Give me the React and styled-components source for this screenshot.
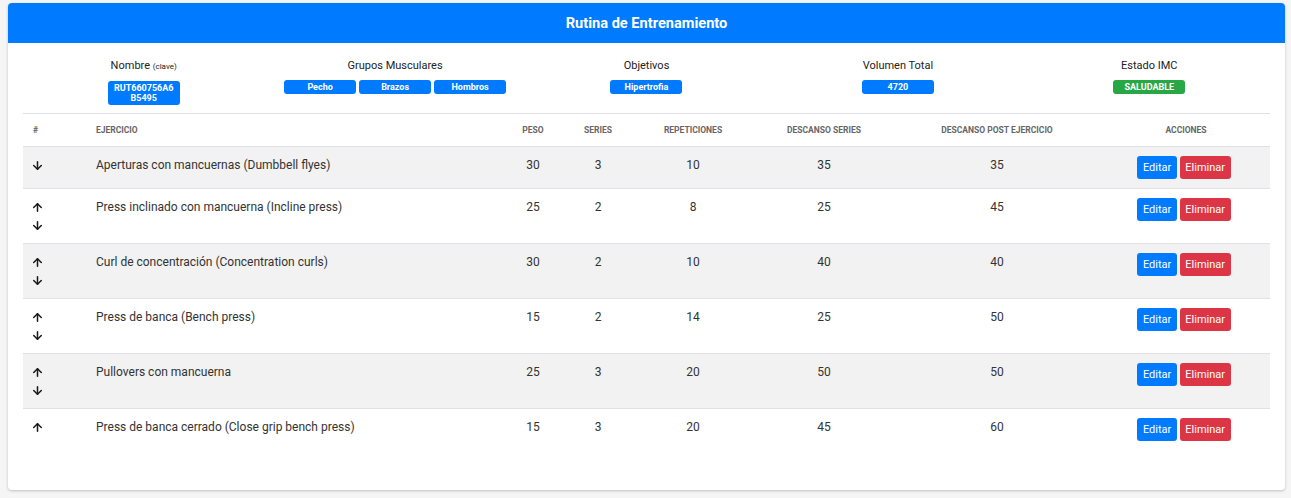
import React from "react";
import styled, { createGlobalStyle } from "styled-components";
import { ArrowUp, ArrowDown } from "lucide-react";

const Global = createGlobalStyle`
  html, body { margin: 0; padding: 0; background: #f5f5f5; }
  body { font-family: Roboto, "Liberation Sans", sans-serif; color: #333; }
  * { box-sizing: border-box; }
`;

const Page = styled.div`
  padding: 3px 6px 0 8px;
  height: 498px;
`;

const Card = styled.div`
  background: #fff;
  border-radius: 4px;
  box-shadow: 0 1px 3px rgba(0, 0, 0, 0.22);
  overflow: hidden;
  height: 487px;
`;

const CardHeader = styled.div`
  background: #007bff;
  height: 40px;
  display: flex;
  align-items: center;
  justify-content: center;
  color: #fff;
  font-weight: 700;
  font-size: 14.6px;
`;

const Info = styled.div`
  display: grid;
  grid-template-columns: repeat(5, 1fr);
  padding: 16px 10px 0 10px;
  height: 70px;
`;

const InfoCol = styled.div`
  display: flex;
  flex-direction: column;
  align-items: center;
  gap: 8px;
`;

const Label = styled.div`
  font-size: 11px;
  line-height: 13px;
  color: #222;
  small { font-size: 8px; }
`;

const BadgeRow = styled.div`
  display: flex;
  gap: 3px;
`;

const Badge = styled.span`
  width: 72px;
  min-height: 14px;
  border-radius: 3px;
  background: ${(p) => p.$bg || "#007bff"};
  color: #fff;
  font-weight: 700;
  font-size: 9px;
  line-height: 10px;
  padding: 2px 4px;
  text-align: center;
  word-break: break-all;
`;

const TableWrap = styled.div`
  padding: 0 15px;
`;

const Table = styled.table`
  width: 100%;
  border-collapse: collapse;
  table-layout: fixed;
`;

const Th = styled.th`
  height: 33px;
  border-top: 1px solid #dee2e6;
  border-bottom: 1px solid #dee2e6;
  font-size: 8.5px;
  font-weight: 700;
  color: #666;
  text-transform: uppercase;
  text-align: ${(p) => p.$align || "center"};
  padding: 0 10px;
  vertical-align: middle;
`;

const Tr = styled.tr`
  background: ${(p) => (p.$striped ? "#f2f2f2" : "#fff")};
  border-bottom: ${(p) => (p.$last ? "none" : "1px solid #dee2e6")};
`;

const Td = styled.td`
  padding: 9px 10px;
  font-size: 12px;
  line-height: 18px;
  color: #333;
  text-align: ${(p) => p.$align || "center"};
  vertical-align: top;
`;

const Arrows = styled.div`
  display: flex;
  flex-direction: column;
  svg { display: block; margin: 2.5px 0 2.5px -2px; color: #1a1a1a; }
`;

const Actions = styled.div`
  display: flex;
  justify-content: center;
  gap: 3px;
  margin-left: -4px;
`;

const Btn = styled.button`
  border: none;
  border-radius: 3px;
  height: 23px;
  padding: 0 5.5px;
  font-family: Roboto, "Liberation Sans", sans-serif;
  font-size: 11px;
  color: #fff;
  background: ${(p) => (p.$danger ? "#dc3545" : "#007bff")};
`;

const rows = [
  ["Aperturas con mancuernas (Dumbbell flyes)", 30, 3, 10, 35, 35],
  ["Press inclinado con mancuerna (Incline press)", 25, 2, 8, 25, 45],
  ["Curl de concentración (Concentration curls)", 30, 2, 10, 40, 40],
  ["Press de banca (Bench press)", 15, 2, 14, 25, 50],
  ["Pullovers con mancuerna", 25, 3, 20, 50, 50],
  ["Press de banca cerrado (Close grip bench press)", 15, 3, 20, 45, 60],
];

export default function App() {
  return (
    <Page>
      <Global />
      <Card>
        <CardHeader>Rutina de Entrenamiento</CardHeader>
        <Info>
          <InfoCol>
            <Label>
              Nombre <small>(clave)</small>
            </Label>
            <Badge>RUT660756A6B5495</Badge>
          </InfoCol>
          <InfoCol>
            <Label>Grupos Musculares</Label>
            <BadgeRow>
              <Badge>Pecho</Badge>
              <Badge>Brazos</Badge>
              <Badge>Hombros</Badge>
            </BadgeRow>
          </InfoCol>
          <InfoCol>
            <Label>Objetivos</Label>
            <Badge>Hipertrofia</Badge>
          </InfoCol>
          <InfoCol>
            <Label>Volumen Total</Label>
            <Badge>4720</Badge>
          </InfoCol>
          <InfoCol>
            <Label>Estado IMC</Label>
            <Badge $bg="#28a745">SALUDABLE</Badge>
          </InfoCol>
        </Info>
        <TableWrap>
          <Table>
            <colgroup>
              <col style={{ width: 63 }} />
              <col style={{ width: 414 }} />
              <col style={{ width: 66 }} />
              <col style={{ width: 64 }} />
              <col style={{ width: 126 }} />
              <col style={{ width: 136 }} />
              <col style={{ width: 210 }} />
              <col style={{ width: 168 }} />
            </colgroup>
            <thead>
              <tr>
                <Th $align="left">#</Th>
                <Th $align="left">Ejercicio</Th>
                <Th>Peso</Th>
                <Th>Series</Th>
                <Th>Repeticiones</Th>
                <Th>Descanso Series</Th>
                <Th>Descanso Post Ejercicio</Th>
                <Th>Acciones</Th>
              </tr>
            </thead>
            <tbody>
              {rows.map((r, i) => (
                <Tr key={i} $striped={i % 2 === 0} $last={i === rows.length - 1}>
                  <Td $align="left">
                    <Arrows>
                      {i > 0 && <ArrowUp size={13} strokeWidth={2.8} />}
                      {i < rows.length - 1 && <ArrowDown size={13} strokeWidth={2.8} />}
                    </Arrows>
                  </Td>
                  <Td $align="left">{r[0]}</Td>
                  <Td>{r[1]}</Td>
                  <Td>{r[2]}</Td>
                  <Td>{r[3]}</Td>
                  <Td>{r[4]}</Td>
                  <Td>{r[5]}</Td>
                  <Td>
                    <Actions>
                      <Btn>Editar</Btn>
                      <Btn $danger>Eliminar</Btn>
                    </Actions>
                  </Td>
                </Tr>
              ))}
            </tbody>
          </Table>
        </TableWrap>
      </Card>
    </Page>
  );
}
